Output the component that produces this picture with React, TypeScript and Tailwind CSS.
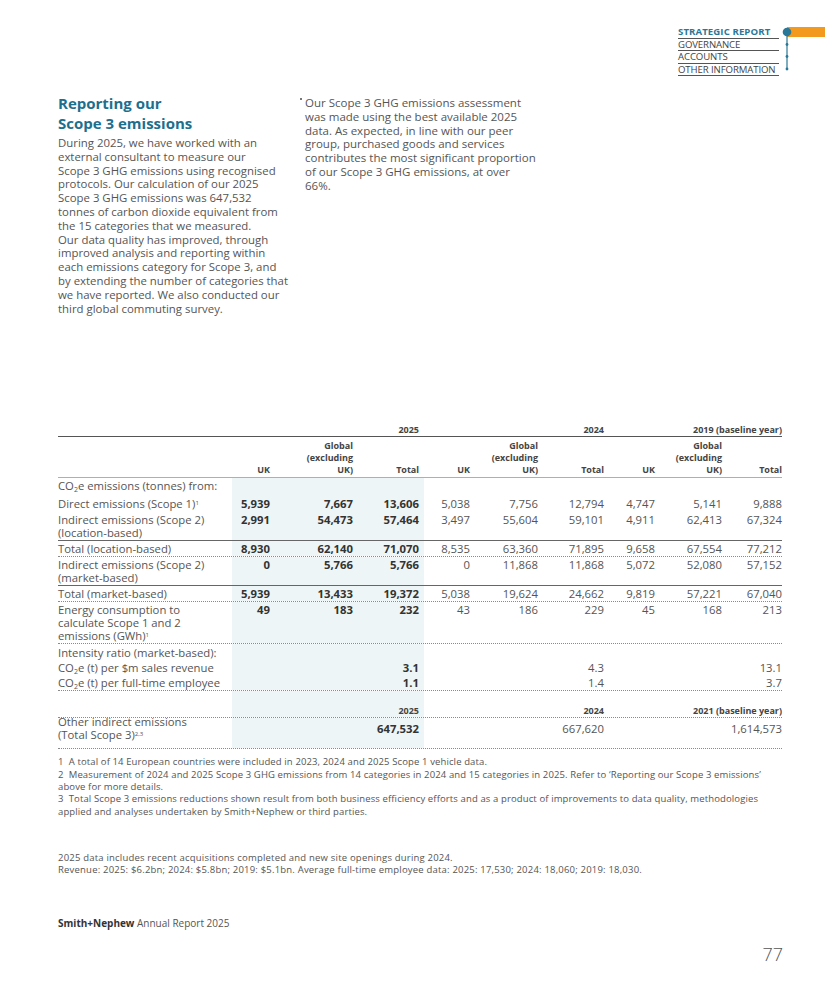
import React from "react";

const COLS = [
  "w-[174px]",
  "w-[43px]",
  "w-[83px]",
  "w-[66px]",
  "w-[46px]",
  "w-[68px]",
  "w-[66px]",
  "w-[51px]",
  "w-[67px]",
  "w-[60px]",
];

const leftLines = [
  "During 2025, we have worked with an",
  "external consultant to measure our",
  "Scope 3 GHG emissions using recognised",
  "protocols. Our calculation of our 2025",
  "Scope 3 GHG emissions was 647,532",
  "tonnes of carbon dioxide equivalent from",
  "the 15 categories that we measured.",
  "Our data quality has improved, through",
  "improved analysis and reporting within",
  "each emissions category for Scope 3, and",
  "by extending the number of categories that",
  "we have reported. We also conducted our",
  "third global commuting survey.",
];

const rightLines = [
  "Our Scope 3 GHG emissions assessment",
  "was made using the best available 2025",
  "data. As expected, in line with our peer",
  "group, purchased goods and services",
  "contributes the most significant proportion",
  "of our Scope 3 GHG emissions, at over",
  "66%.",
];

type Line = "dotted" | "solid" | "none";

function lineClass(line: Line) {
  if (line === "dotted") return "border-b border-dotted border-[#8a8a8a]";
  if (line === "solid") return "border-b-[1.5px] border-[#666]";
  return "";
}

const Co2 = () => (
  <>
    CO<sub className="text-[7px]">2</sub>e
  </>
);

function DataRow({
  label,
  values = [],
  line = "none",
  pad = "pt-[1px] pb-[1px]",
}: {
  label: React.ReactNode;
  values?: string[];
  line?: Line;
  pad?: string;
}) {
  return (
    <div className={`flex ${lineClass(line)}`}>
      <div className={`${COLS[0]} shrink-0 ${pad} leading-[13px] whitespace-nowrap text-[#555]`}>{label}</div>
      {COLS.slice(1).map((w, i) => (
        <div
          key={i}
          className={`${w} shrink-0 ${pad} leading-[13px] text-right ${
            i < 3 ? "bg-[#eef5f6] pr-[5px] font-bold text-[#333]" : "text-[#555]"
          }`}
        >
          {values[i] ?? ""}
        </div>
      ))}
    </div>
  );
}

function YearRow({ years, line, shaded }: { years: string[]; line: string; shaded?: boolean }) {
  return (
    <div className={`flex text-[9px] font-bold text-[#444] leading-[12px] ${line}`}>
      <div className="w-[174px] shrink-0" />
      <div className={`w-[192px] shrink-0 text-right pr-[5px] ${shaded ? "bg-[#eef5f6]" : ""}`}>{years[0]}</div>
      <div className="w-[180px] shrink-0 text-right">{years[1]}</div>
      <div className="w-[178px] shrink-0 text-right">{years[2]}</div>
    </div>
  );
}

function HeadCells() {
  const global = (
    <>
      Global
      <br />
      (excluding
      <br />
      UK)
    </>
  );
  const heads: React.ReactNode[] = ["UK", global, "Total", "UK", global, "Total", "UK", global, "Total"];
  return (
    <div className="flex items-end text-[9px] font-bold text-[#444] leading-[12px] pt-[3px] pb-[1px] border-b-[1.5px] border-[#f0a43a]">
      <div className="w-[174px] shrink-0" />
      {heads.map((h, i) => (
        <div key={i} className={`${COLS[i + 1]} shrink-0 text-right ${i < 3 ? "pr-[5px]" : ""}`}>
          {h}
        </div>
      ))}
    </div>
  );
}

function NavIndicator() {
  return (
    <svg width="46" height="50" viewBox="0 0 46 50" className="block">
      <rect x="8" y="1" width="38" height="10" fill="#f39a1e" />
      <line x1="8" y1="6" x2="8" y2="44" stroke="#2a7898" strokeWidth="1.2" />
      <circle cx="8" cy="6" r="4.3" fill="#2a7898" />
      <circle cx="8" cy="18.5" r="1.4" fill="#2a7898" />
      <circle cx="8" cy="30.5" r="1.4" fill="#2a7898" />
      <circle cx="8" cy="43" r="1.4" fill="#2a7898" />
    </svg>
  );
}

export default function App() {
  return (
    <div className="w-[825px] h-[983px] bg-white overflow-hidden font-['Open_Sans',sans-serif] text-[#555]">
      <header className="flex justify-end pt-[26px]">
        <nav className="w-[101px] text-[9.6px] leading-[11.5px] uppercase text-[#444] tracking-[-0.1px] whitespace-nowrap">
          <div className="border-b border-[#555] font-bold text-[#2a7898] tracking-[0.1px]">Strategic Report</div>
          <div className="border-b border-[#555]">Governance</div>
          <div className="border-b border-[#555]">Accounts</div>
          <div className="border-b border-[#555]">Other Information</div>
        </nav>
        <NavIndicator />
      </header>

      <section className="flex px-[58px] mt-[18px]">
        <div className="w-[247px] shrink-0">
          <h2 className="text-[15px] leading-[19.5px] font-bold text-[#1d6f8e]">
            Reporting our
            <br />
            Scope 3 emissions
          </h2>
          <p className="mt-[3px] text-[11.4px] leading-[13.8px]">
            {leftLines.map((l) => (
              <span key={l} className="block whitespace-nowrap">
                {l}
              </span>
            ))}
          </p>
        </div>
        <div className="relative">
          <span className="absolute left-[-5px] top-[4px] w-[1.5px] h-[1.5px] bg-[#777]" />
          <p className="mt-[2px] text-[11.5px] leading-[13.8px]">
            {rightLines.map((l) => (
              <span key={l} className="block whitespace-nowrap">
                {l}
              </span>
            ))}
          </p>
        </div>
      </section>

      <div className="ml-[58px] w-[724px] mt-[109px] text-[11.3px]">
        <YearRow years={["2025", "2024", "2019 (baseline year)"]} line="border-b-[1.5px] border-[#555]" />
        <HeadCells />
        <DataRow label={<><Co2 /> emissions (tonnes) from:</>} pad="pt-[1px] pb-[4px]" />
        <DataRow
          label={<>Direct emissions (Scope 1)<sup className="text-[6px]">1</sup></>}
          values={["5,939", "7,667", "13,606", "5,038", "7,756", "12,794", "4,747", "5,141", "9,888"]}
          pad="pt-[1px] pb-[2px]"
        />
        <DataRow
          label={<>Indirect emissions (Scope 2)<br />(location-based)</>}
          values={["2,991", "54,473", "57,464", "3,497", "55,604", "59,101", "4,911", "62,413", "67,324"]}
          line="solid"
        />
        <DataRow
          label="Total (location-based)"
          values={["8,930", "62,140", "71,070", "8,535", "63,360", "71,895", "9,658", "67,554", "77,212"]}
          line="dotted"
        />
        <DataRow
          label={<>Indirect emissions (Scope 2)<br />(market-based)</>}
          values={["0", "5,766", "5,766", "0", "11,868", "11,868", "5,072", "52,080", "57,152"]}
          line="solid"
        />
        <DataRow
          label="Total (market-based)"
          values={["5,939", "13,433", "19,372", "5,038", "19,624", "24,662", "9,819", "57,221", "67,040"]}
          line="dotted"
        />
        <DataRow
          label={<>Energy consumption to<br />calculate Scope 1 and 2<br />emissions (GWh)<sup className="text-[6px]">1</sup></>}
          values={["49", "183", "232", "43", "186", "229", "45", "168", "213"]}
          line="dotted"
        />
        <DataRow label="Intensity ratio (market-based):" pad="pt-[2px] pb-[1px]" />
        <DataRow
          label={<><Co2 /> (t) per $m sales revenue</>}
          values={["", "", "3.1", "", "", "4.3", "", "", "13.1"]}
        />
        <DataRow
          label={<><Co2 /> (t) per full-time employee</>}
          values={["", "", "1.1", "", "", "1.4", "", "", "3.7"]}
          line="dotted"
        />
        <div className="flex h-[14px]">
          <div className="w-[174px] shrink-0" />
          <div className="w-[192px] shrink-0 bg-[#eef5f6]" />
        </div>
        <YearRow years={["2025", "2024", "2021 (baseline year)"]} line="border-b border-dotted border-[#8a8a8a]" shaded />
        <div className="flex border-b border-dotted border-[#8a8a8a] h-[31px]">
          <div className="w-[174px] shrink-0 leading-[12.5px] mt-[-2px] text-[#555]">
            Other indirect emissions
            <br />
            (Total Scope 3)<sup className="text-[6px]">2,3</sup>
          </div>
          <div className="w-[192px] shrink-0 bg-[#eef5f6] pr-[5px] pt-[4px] text-right font-bold text-[#333] leading-[13px]">
            647,532
          </div>
          <div className="w-[180px] shrink-0 pt-[4px] text-right leading-[13px]">667,620</div>
          <div className="w-[178px] shrink-0 pt-[4px] text-right leading-[13px]">1,614,573</div>
        </div>
      </div>

      <div className="ml-[58px] mt-[7px] text-[9.5px] leading-[12.3px] tracking-[0.12px] text-[#555] whitespace-nowrap">
        <p>1&nbsp; A total of 14 European countries were included in 2023, 2024 and 2025 Scope 1 vehicle data.</p>
        <p>
          2&nbsp; Measurement of 2024 and 2025 Scope 3 GHG emissions from 14 categories in 2024 and 15 categories in 2025. Refer to ‘Reporting our Scope 3 emissions’
          <br />
          above for more details.
        </p>
        <p>
          3&nbsp; Total Scope 3 emissions reductions shown result from both business efficiency efforts and as a product of improvements to data quality, methodologies
          <br />
          applied and analyses undertaken by Smith+Nephew or third parties.
        </p>
      </div>

      <div className="ml-[58px] mt-[34px] text-[9.5px] leading-[12px] tracking-[0.2px] text-[#555] whitespace-nowrap">
        <p>2025 data includes recent acquisitions completed and new site openings during 2024.</p>
        <p>Revenue: 2025: $6.2bn; 2024: $5.8bn; 2019: $5.1bn. Average full-time employee data: 2025: 17,530; 2024: 18,060; 2019: 18,030.</p>
      </div>

      <footer className="pl-[58px] pr-[42px] mt-[41px]">
        <p className="text-[10px] leading-[13px] text-[#555]">
          <span className="font-bold text-[#333]">Smith+Nephew</span> Annual Report 2025
        </p>
        <p className="mt-[13px] text-right text-[18px] leading-[22px] font-light text-[#555]">77</p>
      </footer>
    </div>
  );
}
